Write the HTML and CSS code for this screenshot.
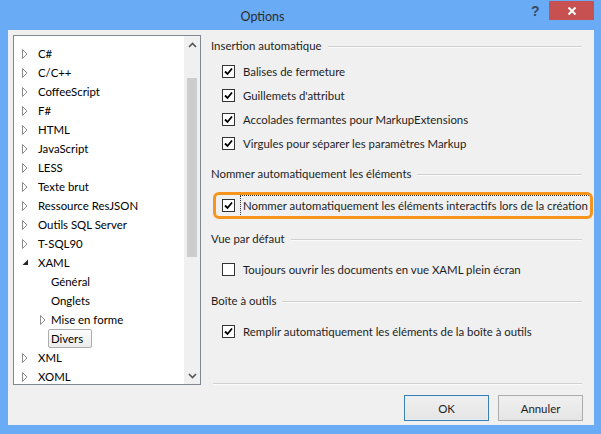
FILE: index.html
```html
<!DOCTYPE html>
<html lang="fr">
<head>
<meta charset="utf-8">
<title>Options</title>
<link rel="stylesheet" href="styles.css">
</head>
<body>
<div class="window">
  <div class="titlebar">
    <div class="title">Options</div>
    <div class="help">?</div>
    <div class="close"><svg width="10" height="10" viewBox="0 0 10 10"><path d="M1.5 1.5 L8.5 8.5 M8.5 1.5 L1.5 8.5" stroke="#fff" stroke-width="2"/></svg></div>
  </div>
  <div class="client">
    <div class="tree">
      <ul class="list">
        <li class="row"><span class="arr"><svg width="6" height="10" viewBox="0 0 6 10"><path d="M0.5 0.5 L5 5 L0.5 9.5 Z" fill="none" stroke="#8c8c8c"/></svg></span>C#</li>
        <li class="row"><span class="arr"><svg width="6" height="10" viewBox="0 0 6 10"><path d="M0.5 0.5 L5 5 L0.5 9.5 Z" fill="none" stroke="#8c8c8c"/></svg></span>C/C++</li>
        <li class="row"><span class="arr"><svg width="6" height="10" viewBox="0 0 6 10"><path d="M0.5 0.5 L5 5 L0.5 9.5 Z" fill="none" stroke="#8c8c8c"/></svg></span>CoffeeScript</li>
        <li class="row"><span class="arr"><svg width="6" height="10" viewBox="0 0 6 10"><path d="M0.5 0.5 L5 5 L0.5 9.5 Z" fill="none" stroke="#8c8c8c"/></svg></span>F#</li>
        <li class="row"><span class="arr"><svg width="6" height="10" viewBox="0 0 6 10"><path d="M0.5 0.5 L5 5 L0.5 9.5 Z" fill="none" stroke="#8c8c8c"/></svg></span>HTML</li>
        <li class="row"><span class="arr"><svg width="6" height="10" viewBox="0 0 6 10"><path d="M0.5 0.5 L5 5 L0.5 9.5 Z" fill="none" stroke="#8c8c8c"/></svg></span>JavaScript</li>
        <li class="row"><span class="arr"><svg width="6" height="10" viewBox="0 0 6 10"><path d="M0.5 0.5 L5 5 L0.5 9.5 Z" fill="none" stroke="#8c8c8c"/></svg></span>LESS</li>
        <li class="row"><span class="arr"><svg width="6" height="10" viewBox="0 0 6 10"><path d="M0.5 0.5 L5 5 L0.5 9.5 Z" fill="none" stroke="#8c8c8c"/></svg></span>Texte brut</li>
        <li class="row"><span class="arr"><svg width="6" height="10" viewBox="0 0 6 10"><path d="M0.5 0.5 L5 5 L0.5 9.5 Z" fill="none" stroke="#8c8c8c"/></svg></span>Ressource ResJSON</li>
        <li class="row"><span class="arr"><svg width="6" height="10" viewBox="0 0 6 10"><path d="M0.5 0.5 L5 5 L0.5 9.5 Z" fill="none" stroke="#8c8c8c"/></svg></span>Outils SQL Server</li>
        <li class="row"><span class="arr"><svg width="6" height="10" viewBox="0 0 6 10"><path d="M0.5 0.5 L5 5 L0.5 9.5 Z" fill="none" stroke="#8c8c8c"/></svg></span>T-SQL90</li>
        <li class="row"><span class="arr"><svg width="7" height="7" viewBox="0 0 7 7"><path d="M6 0.5 L6 6 L0.5 6 Z" fill="#262626"/></svg></span>XAML</li>
        <li class="row sub"><span class="arr"></span>Général</li>
        <li class="row sub"><span class="arr"></span>Onglets</li>
        <li class="row sub"><span class="arr"><svg width="6" height="10" viewBox="0 0 6 10"><path d="M0.5 0.5 L5 5 L0.5 9.5 Z" fill="none" stroke="#8c8c8c"/></svg></span>Mise en forme</li>
        <li class="row sub"><span class="arr"></span><span class="selected">Divers</span></li>
        <li class="row"><span class="arr"><svg width="6" height="10" viewBox="0 0 6 10"><path d="M0.5 0.5 L5 5 L0.5 9.5 Z" fill="none" stroke="#8c8c8c"/></svg></span>XML</li>
        <li class="row"><span class="arr"><svg width="6" height="10" viewBox="0 0 6 10"><path d="M0.5 0.5 L5 5 L0.5 9.5 Z" fill="none" stroke="#8c8c8c"/></svg></span>XOML</li>
      </ul>
      <div class="scrollbar">
        <div class="sb-btn"><svg width="9" height="6" viewBox="0 0 9 6"><path d="M1 5 L4.5 1.5 L8 5" fill="none" stroke="#555" stroke-width="1.6"/></svg></div>
        <div class="sb-track"><div class="sb-thumb"></div></div>
        <div class="sb-btn"><svg width="9" height="6" viewBox="0 0 9 6"><path d="M1 1 L4.5 4.5 L8 1" fill="none" stroke="#555" stroke-width="1.6"/></svg></div>
      </div>
    </div>
    <div class="panel">
      <div class="heading">Insertion automatique</div>
      <div class="rows first">
        <div class="opt"><span class="cb checked"><svg width="11" height="11" viewBox="0 0 11 11"><path d="M2 5.5 L4.5 8 L9 2.5" fill="none" stroke="#000" stroke-width="1.8"/></svg></span><span class="lbl">Balises de fermeture</span></div>
        <div class="opt"><span class="cb checked"><svg width="11" height="11" viewBox="0 0 11 11"><path d="M2 5.5 L4.5 8 L9 2.5" fill="none" stroke="#000" stroke-width="1.8"/></svg></span><span class="lbl">Guillemets d'attribut</span></div>
        <div class="opt"><span class="cb checked"><svg width="11" height="11" viewBox="0 0 11 11"><path d="M2 5.5 L4.5 8 L9 2.5" fill="none" stroke="#000" stroke-width="1.8"/></svg></span><span class="lbl">Accolades fermantes pour MarkupExtensions</span></div>
        <div class="opt"><span class="cb checked"><svg width="11" height="11" viewBox="0 0 11 11"><path d="M2 5.5 L4.5 8 L9 2.5" fill="none" stroke="#000" stroke-width="1.8"/></svg></span><span class="lbl">Virgules pour séparer les paramètres Markup</span></div>
      </div>
      <div class="heading h2">Nommer automatiquement les éléments</div>
      <div class="highlight">
        <span class="cb checked"><svg width="11" height="11" viewBox="0 0 11 11"><path d="M2 5.5 L4.5 8 L9 2.5" fill="none" stroke="#000" stroke-width="1.8"/></svg></span><span class="lbl focus">Nommer automatiquement les éléments interactifs lors de la création</span>
      </div>
      <div class="heading h3">Vue par défaut</div>
      <div class="rows">
        <div class="opt"><span class="cb"></span><span class="lbl">Toujours ouvrir les documents en vue XAML plein écran</span></div>
      </div>
      <div class="heading h3">Boîte à outils</div>
      <div class="rows">
        <div class="opt"><span class="cb checked"><svg width="11" height="11" viewBox="0 0 11 11"><path d="M2 5.5 L4.5 8 L9 2.5" fill="none" stroke="#000" stroke-width="1.8"/></svg></span><span class="lbl">Remplir automatiquement les éléments de la boîte à outils</span></div>
      </div>
      <div class="separator"></div>
      <div class="buttons">
        <button class="btn default">OK</button>
        <button class="btn">Annuler</button>
      </div>
    </div>
  </div>
</div>
</body>
</html>
```
FILE: styles.css
```css
* { box-sizing: border-box; }
html, body { margin: 0; padding: 0; }
body {
  font-family: Lato, "Liberation Sans", sans-serif;
  font-size: 11.4px;
  color: #000;
  background: #6badf6;
}
.window {
  width: 601px;
  height: 434px;
  background: #6aabf5;
  display: flex;
  flex-direction: column;
  padding: 0 7px 9px 8px;
}
.titlebar {
  height: 30px;
  display: flex;
  align-items: flex-start;
  flex: none;
}
.title {
  flex: 1;
  text-align: center;
  font-size: 12.5px;
  line-height: 33px;
  color: #2b2b2b;
  padding-right: 8px;
}
.help {
  width: 24px;
  margin-top: 1px;
  height: 19px;
  line-height: 21px;
  font-size: 14px;
  font-weight: bold;
  font-family: "Liberation Sans", sans-serif;
  color: #3b4a60;
  padding-left: 6px;
}
.close {
  width: 45px;
  height: 19px;
  margin-top: 1px;
  background: #c75050;
  display: flex;
  align-items: center;
  justify-content: center;
}
.client {
  flex: 1;
  background: #f0f0f0;
  display: flex;
  min-height: 0;
  min-width: 0;
}
.tree {
  margin: 5px 0 0 5px;
  width: 188px;
  height: 350px;
  border: 1px solid #828790;
  background: #fff;
  display: flex;
  flex: none;
}
.list {
  list-style: none;
  margin: 0;
  padding: 8px 0 0 8px;
  flex: 1;
}
.row {
  height: 19px;
  line-height: 19px;
  display: flex;
  align-items: center;
  white-space: nowrap;
}
.row.sub { padding-left: 18px; }
.arr {
  width: 16px;
  flex: none;
  display: flex;
  align-items: center;
}
.row.sub .arr { width: 11px; }
.selected {
  margin-left: -3px;
  padding: 0 8px 0 2px;
  border: 1px solid #adadad;
  border-radius: 2px;
  background: linear-gradient(#fcfcfc, #ececec);
  height: 19px;
  display: inline-flex;
  align-items: center;
}
.scrollbar {
  width: 16px;
  flex: none;
  background: #f0f0f0;
  display: flex;
  flex-direction: column;
}
.sb-btn {
  height: 17px;
  display: flex;
  align-items: center;
  justify-content: center;
}
.sb-track {
  flex: 1;
  padding: 25px 3px 0 3px;
}
.sb-thumb {
  height: 179px;
  background: #cdcdcd;
}
.panel {
  flex: 1;
  min-width: 0;
  margin-left: 10px;
  padding: 8px 12px 4px 0;
  display: flex;
  flex-direction: column;
}
.heading {
  display: flex;
  align-items: center;
  line-height: 16px;
  height: 16px;
  color: #1e1e1e;
  white-space: nowrap;
}
.heading::after {
  content: "";
  flex: 1;
  margin-left: 6px;
  border-top: 1px solid #d0d0d0;
  border-bottom: 1px solid #fbfbfb;
  margin-top: 1px;
}
.h2 { margin-top: 11px; }
.h3 { margin-top: 12px; }
.rows { margin-top: 10px; }
.rows.first { margin-top: 5px; }
.opt {
  height: 24px;
  display: flex;
  align-items: center;
  padding-left: 11px;
  white-space: nowrap;
}
.cb {
  width: 13px;
  height: 13px;
  border: 1px solid #333;
  background: #fff;
  flex: none;
  display: flex;
  align-items: center;
  justify-content: center;
}
.lbl {
  margin-left: 8px;
  color: #1e1e1e;
}
.highlight {
  margin: 10px -11px 0 2px;
  height: 27px;
  border: 3px solid #f7941d;
  border-radius: 6px;
  display: flex;
  align-items: center;
  padding-left: 6px;
  white-space: nowrap;
  overflow: hidden;
}
.lbl.focus {
  margin-left: 5px;
  border: 1px dotted #333;
  padding: 1px 2px 2px 2px;
  line-height: 17px;
}
.separator {
  margin-top: auto;
  margin-left: 2px;
  border-top: 1px solid #d0d0d0;
  border-bottom: 1px solid #fbfbfb;
}
.buttons {
  margin-top: 10px;
  display: flex;
  justify-content: flex-end;
  gap: 9px;
  margin-right: -1px;
}
.btn {
  width: 85px;
  height: 26px;
  font-family: inherit;
  font-size: 11.4px;
  color: #1e1e1e;
  background: linear-gradient(#f0f0f0, #e5e5e5);
  border: 1px solid #acacac;
  padding: 0;
}
.btn.default {
  border-color: #3c7fb1;
  box-shadow: inset 0 0 0 1px #dff0fb;
}
```
